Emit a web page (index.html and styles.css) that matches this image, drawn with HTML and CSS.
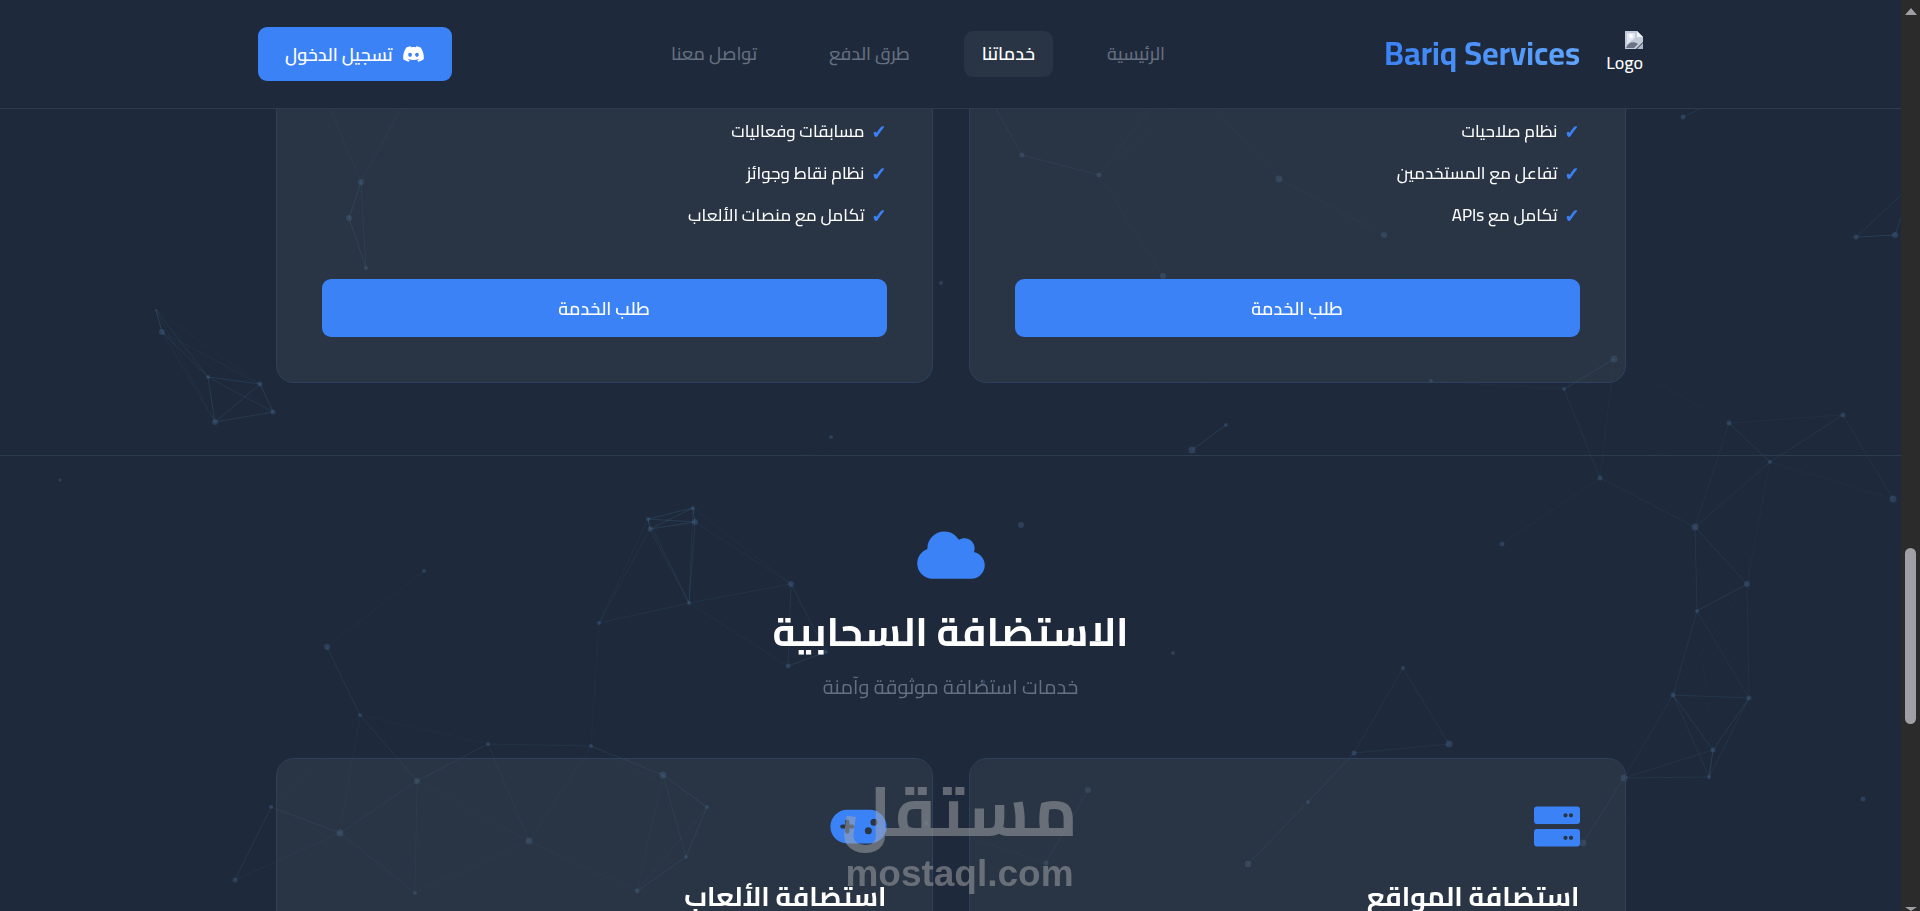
FILE: index.html
```html
<!DOCTYPE html>
<html lang="ar" dir="rtl">
<head>
    <meta charset="UTF-8">
    <meta name="viewport" content="width=device-width, initial-scale=1.0">
    <title>Bariq Services - خدماتنا</title>
    <link rel="stylesheet" href="styles.css">
</head>
<body>
    <div class="page">
        <canvas id="particles" class="particles"></canvas>

        <header class="header">
            <div class="header-container">
                <div class="brand">
                    <div class="logo">
                        <svg width="18" height="18" viewBox="0 0 18 18" aria-hidden="true">
                            <path d="M0 0h12l6 6v5l-7 7H0z" fill="#c3cbd8"/>
                            <path d="M12 0v6h6z" fill="#eef1f6"/>
                            <path d="M2 2h8v5l-8 6z" fill="#dfe6f2"/>
                            <circle cx="6" cy="5" r="2" fill="#fff"/>
                            <path d="M1 17c2-6 8-7 12-4l-4 4z" fill="#6b7486"/>
                            <path d="M18 12v6h-6z" fill="#aeb7c6"/>
                        </svg>
                        <span>Logo</span>
                    </div>
                    <a href="#" class="brand-name" dir="ltr">Bariq Services</a>
                </div>

                <nav class="nav">
                    <a href="#">الرئيسية</a>
                    <a href="#" class="active">خدماتنا</a>
                    <a href="#">طرق الدفع</a>
                    <a href="#">تواصل معنا</a>
                </nav>

                <button type="button" class="login-btn">
                    <svg width="23" height="18" viewBox="0 0 640 512" fill="currentColor" aria-hidden="true"><path d="M524.531,69.836a1.5,1.5,0,0,0-.764-.7A485.065,485.065,0,0,0,404.081,32.03a1.816,1.816,0,0,0-1.923.91,337.461,337.461,0,0,0-14.9,30.6,447.848,447.848,0,0,0-134.426,0,309.541,309.541,0,0,0-15.135-30.6,1.89,1.89,0,0,0-1.924-.91A483.689,483.689,0,0,0,116.085,69.137a1.712,1.712,0,0,0-.788.676C39.068,183.651,18.186,294.69,28.43,404.354a2.016,2.016,0,0,0,.765,1.375A487.666,487.666,0,0,0,176.02,479.918a1.9,1.9,0,0,0,2.063-.676A348.2,348.2,0,0,0,208.12,430.4a1.86,1.86,0,0,0-1.019-2.588,321.173,321.173,0,0,1-45.868-21.853,1.885,1.885,0,0,1-.185-3.126c3.082-2.309,6.166-4.711,9.109-7.137a1.819,1.819,0,0,1,1.9-.256c96.229,43.917,200.41,43.917,295.5,0a1.812,1.812,0,0,1,1.924.233c2.944,2.426,6.027,4.851,9.132,7.16a1.884,1.884,0,0,1-.162,3.126,301.407,301.407,0,0,1-45.89,21.83,1.875,1.875,0,0,0-1,2.611,391.055,391.055,0,0,0,30.014,48.815,1.864,1.864,0,0,0,2.063.7A486.048,486.048,0,0,0,610.7,405.729a1.882,1.882,0,0,0,.765-1.352C623.729,277.594,590.933,167.465,524.531,69.836ZM222.491,337.58c-28.972,0-52.844-26.587-52.844-59.239S193.056,219.1,222.491,219.1c29.665,0,53.306,26.82,52.843,59.239C275.334,310.993,251.924,337.58,222.491,337.58Zm195.38,0c-28.971,0-52.843-26.587-52.843-59.239S388.437,219.1,417.871,219.1c29.667,0,53.307,26.82,52.844,59.239C470.715,310.993,447.538,337.58,417.871,337.58Z"/></svg>
                    <span>تسجيل الدخول</span>
                </button>
            </div>
        </header>

        <main>
            <!-- خدمات البوتات -->
            <section class="section section-bots">
                <div class="cards">
                    <article class="card card-cut">
                        <ul class="features">
                            <li>نظام صلاحيات</li>
                            <li>تفاعل مع المستخدمين</li>
                            <li>تكامل مع APIs</li>
                        </ul>
                        <button type="button" class="order-btn">طلب الخدمة</button>
                    </article>
                    <article class="card card-cut">
                        <ul class="features">
                            <li>مسابقات وفعاليات</li>
                            <li>نظام نقاط وجوائز</li>
                            <li>تكامل مع منصات الألعاب</li>
                        </ul>
                        <button type="button" class="order-btn">طلب الخدمة</button>
                    </article>
                </div>
            </section>

            <!-- الاستضافة -->
            <section class="section section-hosting">
                <div class="section-head">
                    <svg class="section-icon" width="68" height="54" viewBox="0 0 640 512" fill="currentColor" aria-hidden="true"><path d="M0 336c0 79.5 64.5 144 144 144H512c70.7 0 128-57.3 128-128c0-61.9-44-113.6-102.4-125.4c4.1-10.7 6.4-22.4 6.4-34.6c0-53-43-96-96-96c-19.7 0-38.1 6-53.3 16.2C367 64.2 315.3 32 256 32C167.6 32 96 103.6 96 192c0 2.7 .1 5.4 .2 8.1C40.2 219.8 0 273.2 0 336z"/></svg>
                    <h2>الاستضافة السحابية</h2>
                    <p>خدمات استضافة موثوقة وآمنة</p>
                </div>
                <div class="cards">
                    <article class="card">
                        <svg class="card-icon" width="46" height="45" viewBox="0 0 46 45" fill="currentColor" fill-rule="evenodd" aria-hidden="true"><path d="M3 2.500h40a3 3 0 0 1 3 3v11.500a3 3 0 0 1-3 3H3a3 3 0 0 1-3-3V5.500a3 3 0 0 1 3-3zM31.500 9.200a2.100 2.100 0 1 0 .01 4.200a2.100 2.100 0 1 0-.01-4.200zM37 9.200a2.100 2.100 0 1 0 .01 4.200a2.100 2.100 0 1 0-.01-4.200z"/><path d="M3 25h40a3 3 0 0 1 3 3v11.500a3 3 0 0 1-3 3H3a3 3 0 0 1-3-3V28a3 3 0 0 1 3-3zM31.500 31.700a2.100 2.100 0 1 0 .01 4.200a2.100 2.100 0 1 0-.01-4.200zM37 31.700a2.100 2.100 0 1 0 .01 4.200a2.100 2.100 0 1 0-.01-4.200z"/></svg>
                        <h3>استضافة المواقع</h3>
                    </article>
                    <article class="card">
                        <svg class="card-icon" width="57" height="45" viewBox="0 0 640 512" fill="currentColor" fill-rule="evenodd" aria-hidden="true"><path d="M192 64C86 64 0 150 0 256S86 448 192 448H448c106 0 192-86 192-192s-86-192-192-192H192zM496 168a40 40 0 1 1 0 80 40 40 0 1 1 0-80zM392 304a40 40 0 1 1 80 0 40 40 0 1 1 -80 0zM168 200c0-13.300 10.700-24 24-24s24 10.700 24 24v32h32c13.300 0 24 10.700 24 24s-10.700 24-24 24H216v32c0 13.300-10.700 24-24 24s-24-10.700-24-24V280H136c-13.300 0-24-10.700-24-24s10.700-24 24-24h32V200z"/></svg>
                        <h3>استضافة الألعاب</h3>
                    </article>
                </div>
            </section>
        </main>

        <div class="watermark">
            <span class="watermark-ar">مستقل</span>
            <span class="watermark-en" dir="ltr">mostaql.com</span>
        </div>
    </div>

    <div class="scrollbar" aria-hidden="true">
        <span class="arrow arrow-up"></span>
        <span class="thumb"></span>
        <span class="arrow arrow-down"></span>
    </div>

    <script src="script.js"></script>
</body>
</html>
```
FILE: styles.css
```css
* {
    box-sizing: border-box;
    margin: 0;
    padding: 0;
}

:root {
    --primary: #3b82f6;
    --bg: #1e293b;
    --card: #293544;
    --text: #ffffff;
    --muted: #667080;
    --line: #2b3b50;
    --card-line: #2d405c;
}

body {
    font-family: "Cairo", "DejaVu Sans Condensed", "DejaVu Sans", sans-serif;
    font-size: 18px;
    color: var(--text);
    background: var(--bg);
    display: flex;
    flex-direction: row-reverse;
    height: 100vh;
    overflow: hidden;
}

a {
    text-decoration: none;
}

button {
    font-family: inherit;
    color: var(--text);
    background: var(--primary);
    border: none;
    border-radius: 9px;
    cursor: pointer;
}

.page {
    position: relative;
    flex: 1;
    min-width: 0;
    overflow: hidden;
}

/* خلفية الجزيئات */
.particles {
    position: absolute;
    inset: 0;
    width: 100%;
    height: 100%;
}

/* الهيدر */
.header {
    position: relative;
    background: var(--bg);
    border-bottom: 1px solid var(--line);
}

.header-container {
    max-width: 1385px;
    height: 108px;
    margin: 0 auto;
    display: flex;
    align-items: center;
    justify-content: space-between;
}

.brand {
    display: flex;
    align-items: center;
    gap: 26px;
}

.logo {
    display: flex;
    flex-direction: column;
    font-weight: 500;
    line-height: 27px;
    height: 46px;
}

.brand-name {
    font-size: 32px;
    line-height: 58px;
    padding-bottom: 2px;
    font-weight: bold;
    color: transparent;
    background: linear-gradient(90deg, #3b82f6, #60a5fa);
    background-clip: text;
    -webkit-background-clip: text;
}

.nav {
    display: flex;
    gap: 36px;
}

.nav a {
    padding: 0 18px;
    line-height: 46px;
    border-radius: 9px;
    font-weight: 500;
    color: var(--muted);
}

.nav a.active {
    color: var(--text);
    background: var(--card);
    font-weight: 600;
}

.login-btn {
    display: flex;
    align-items: center;
    gap: 9px;
    height: 54px;
    padding: 0 27px;
    font-size: 18px;
    font-weight: 600;
}

/* الأقسام */
.section {
    position: relative;
}

.section-bots {
    padding-bottom: 72px;
    border-bottom: 1px solid var(--line);
}

.section-hosting {
    padding-top: 72px;
}

.section-head {
    text-align: center;
    margin-bottom: 50px;
}

.section-icon {
    display: block;
    margin: 0 auto 16px;
    color: var(--primary);
}

.section-head h2 {
    font-size: 40px;
    line-height: 68px;
}

.section-head p {
    font-size: 20px;
    line-height: 42px;
    color: var(--muted);
}

/* البطاقات */
.cards {
    max-width: 1350px;
    margin: 0 auto;
    display: grid;
    grid-template-columns: 1fr 1fr;
    gap: 36px;
}

.card {
    padding: 45px;
    background: rgba(85, 101, 104, 0.2);
    border: 1px solid var(--card-line);
    border-radius: 18px;
}

.card-cut {
    padding-top: 1px;
    border-top: none;
    border-radius: 0 0 18px 18px;
}

.card-icon {
    display: block;
    margin-bottom: 25px;
    color: var(--primary);
}

.card h3 {
    font-size: 27px;
    line-height: 45px;
}

.features {
    list-style: none;
    margin-bottom: 43px;
}

.features li {
    display: flex;
    align-items: center;
    gap: 8px;
    height: 42px;
    font-size: 17px;
    font-weight: 500;
}

.features li::before {
    content: "✓";
    width: 14px;
    font-family: "DejaVu Sans", sans-serif;
    font-size: 18px;
    font-weight: bold;
    color: var(--primary);
    -webkit-text-stroke: 1px var(--primary);
}

.order-btn {
    width: 100%;
    height: 58px;
    font-size: 18px;
    font-weight: 600;
}

/* العلامة المائية */
.watermark {
    position: absolute;
    left: 0;
    right: 0;
    bottom: 16px;
    padding-left: 18px;
    display: flex;
    flex-direction: column;
    align-items: center;
    color: #a9a9ad;
    opacity: 0.5;
    font-weight: bold;
}

.watermark-ar {
    font-size: 69px;
    line-height: 84px;
}

.watermark-en {
    font-family: "Liberation Sans", sans-serif;
    font-size: 37px;
    line-height: 42px;
}

/* شريط التمرير */
.scrollbar {
    width: 19px;
    background: #2b2b2b;
    display: flex;
    flex-direction: column;
    align-items: center;
    justify-content: space-between;
    padding-top: 8px;
}

.arrow {
    border: 6px solid transparent;
}

.arrow-up {
    border-top: 0;
    border-bottom: 7px solid #9f9fa5;
}

.arrow-down {
    border-bottom: 0;
    border-top: 4px solid #9f9fa5;
}

.thumb {
    width: 11px;
    height: 176px;
    margin-top: 350px;
    border-radius: 6px;
    background: #9f9fa5;
}
```
FILE: script.js
```javascript
// x, y, radius
const points = [
    [156, 310, 1], [162, 332, 3], [208, 377, 2], [260, 384, 2.5], [273, 412, 2.5], [215, 422, 3],
    [361, 182, 3], [349, 218, 3], [366, 268, 2], [318, 80, 2], [412, 88, 2],
    [1022, 155, 2.5], [1099, 175, 2.5], [1163, 276, 3], [941, 283, 2], [1279, 179, 3.5],
    [980, 80, 2], [1165, 88, 2], [1198, 90, 2],
    [1683, 117, 2.5], [1740, 90, 2], [1384, 235, 3], [1856, 237, 2.5], [1895, 235, 3], [1912, 185, 2],
    [1614, 359, 3.5], [1564, 389, 2], [1431, 381, 2],
    [831, 437, 2], [1192, 450, 3.5], [1226, 425, 2],
    [648, 519, 2], [650, 529, 2.5], [693, 508, 2], [695, 522, 3], [791, 584, 3], [689, 603, 2],
    [788, 666, 2.5], [826, 652, 2], [1021, 525, 3], [1173, 653, 2], [983, 682, 2.5],
    [1088, 790, 3], [663, 775, 3.5], [707, 807, 2], [686, 857, 2], [1248, 864, 3.5],
    [926, 823, 2], [1046, 863, 2.5],
    [60, 480, 1.5], [424, 571, 2], [327, 647, 3], [360, 715, 2], [488, 744, 2], [591, 746, 2],
    [417, 781, 3], [599, 623, 2], [271, 807, 2], [340, 833, 3.5], [529, 841, 3.5],
    [235, 880, 2.5], [415, 893, 2], [637, 891, 2.5],
    [1729, 423, 2.5], [1843, 415, 2.5], [1770, 462, 2], [1893, 499, 3.5], [1600, 478, 2.5],
    [1502, 544, 2.5], [1695, 527, 3.5], [1747, 584, 3], [1697, 611, 2], [1673, 695, 2.5],
    [1749, 698, 2.5], [1713, 750, 2.5], [1709, 777, 2], [1624, 778, 3.5], [1863, 799, 2.5],
    [1403, 668, 2], [1354, 753, 2.5], [1449, 744, 3.5], [1308, 802, 2], [1583, 843, 3.5]
];
const linkDistance = 169;

function drawParticles() {
    const canvas = document.getElementById('particles');
    canvas.width = canvas.clientWidth;
    canvas.height = canvas.clientHeight;
    const ctx = canvas.getContext('2d');

    for (let i = 0; i < points.length; i++) {
        const [x, y, r] = points[i];
        for (let j = i + 1; j < points.length; j++) {
            const d = Math.hypot(x - points[j][0], y - points[j][1]);
            if (d > linkDistance) continue;
            ctx.strokeStyle = `rgba(75, 135, 175, ${0.28 * (1 - d / linkDistance)})`;
            ctx.beginPath();
            ctx.moveTo(x, y);
            ctx.lineTo(points[j][0], points[j][1]);
            ctx.stroke();
        }
        ctx.fillStyle = 'rgba(90, 130, 180, 0.25)';
        ctx.beginPath();
        ctx.arc(x, y, r, 0, Math.PI * 2);
        ctx.fill();
    }
}

drawParticles();
window.addEventListener('resize', drawParticles);
```
